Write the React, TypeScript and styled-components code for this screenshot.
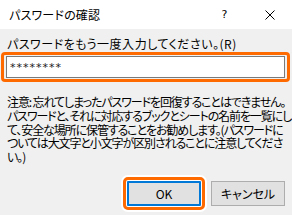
import React from "react";
import styled, { createGlobalStyle } from "styled-components";

const GlobalStyle = createGlobalStyle`
  html, body {
    margin: 0;
    padding: 0;
    width: 292px;
    height: 215px;
    overflow: hidden;
    background: #f0f0f0;
  }
  * { box-sizing: border-box; }
`;

const Window = styled.div`
  width: 292px;
  height: 215px;
  display: flex;
  flex-direction: column;
  background: #f0f0f0;
  font-family: "Noto Sans CJK JP", "Noto Sans", sans-serif;
  font-feature-settings: "palt";
  font-size: 12px;
  color: #000;
`;

const TitleBar = styled.div`
  height: 29px;
  flex: none;
  display: flex;
  align-items: center;
  background: #ffffff;
`;

const Title = styled.div`
  flex: 1;
  padding-left: 9px;
  font-size: 12px;
  line-height: 16px;
  letter-spacing: 0.2px;
  white-space: nowrap;
`;

const TitleButton = styled.div`
  width: 45px;
  height: 29px;
  display: flex;
  align-items: center;
  justify-content: center;
  font-family: "DejaVu Sans", sans-serif;
  font-size: 11px;
  color: #000;
`;

const Body = styled.div`
  flex: 1;
  display: flex;
  flex-direction: column;
  padding: 7px 7px 0 6px;
`;

const Label = styled.div`
  padding-left: 1px;
  line-height: 16px;
  letter-spacing: 0.5px;
  white-space: nowrap;
`;

const Highlight = styled.div<{ $variant: "field" | "button" }>`
  position: relative;
  display: flex;
  &::after {
    content: "";
    position: absolute;
    pointer-events: none;
    inset: ${(p) => (p.$variant === "field" ? "-4px -5px" : "-4px -4px")};
    border: 3px solid #ff6a00;
    border-radius: ${(p) => (p.$variant === "field" ? "4px" : "5px")};
    box-shadow: ${(p) =>
      p.$variant === "button"
        ? "0 0 0 2px #ffffff, inset 0 0 0 1px #ffffff"
        : "none"};
  }
`;

const FieldWrap = styled(Highlight)`
  margin-top: 4px;
  width: 279px;
`;

const PasswordInput = styled.input`
  width: 279px;
  height: 22px;
  margin: 0;
  padding: 0 0 0 3px;
  border: 1px solid #7a7a7a;
  background: #ffffff;
  font-family: "DejaVu Sans", sans-serif;
  font-size: 11px;
  letter-spacing: 1px;
  color: #1a1a1a;
  outline: none;
`;

const Note = styled.div`
  margin-top: 17px;
  padding-left: 1px;
  display: flex;
  flex-direction: column;
  letter-spacing: -1.1px;
  white-space: nowrap;
`;

const NoteLine = styled.div`
  height: 13.75px;
  line-height: 13.75px;
`;

const ButtonRow = styled.div`
  margin-top: auto;
  margin-bottom: 9px;
  display: flex;
  justify-content: flex-end;
  gap: 10px;
`;

const DialogButton = styled.button<{ $primary?: boolean }>`
  width: 74px;
  height: 25px;
  margin: 0;
  padding: 0;
  background: #e1e1e1;
  border: ${(p) => (p.$primary ? "2px solid #0078d7" : "1px solid #adadad")};
  font-family: "Noto Sans CJK JP", "Noto Sans", sans-serif;
  font-feature-settings: "palt";
  font-size: 12px;
  color: #000;
  display: flex;
  align-items: center;
  justify-content: center;
`;

const noteLines = [
  "注意: 忘れてしまったパスワードを回復することはできません。",
  "パスワードと、それに対応するブックとシートの名前を一覧にし",
  "て、安全な場所に保管することをお勧めします。(パスワードに",
  "ついては大文字と小文字が区別されることに注意してくださ",
  "い。)",
];

export default function App() {
  return (
    <>
      <GlobalStyle />
      <Window>
        <TitleBar>
          <Title>パスワードの確認</Title>
          <TitleButton>?</TitleButton>
          <TitleButton>
            <svg width="10" height="10" viewBox="0 0 10 10">
              <path d="M0.5 0.5 L9.5 9.5 M9.5 0.5 L0.5 9.5" stroke="#000" strokeWidth="1" fill="none" />
            </svg>
          </TitleButton>
        </TitleBar>
        <Body>
          <Label>パスワードをもう一度入力してください。(R)</Label>
          <FieldWrap $variant="field">
            <PasswordInput type="text" value="********" readOnly />
          </FieldWrap>
          <Note>
            {noteLines.map((line) => (
              <NoteLine key={line}>{line}</NoteLine>
            ))}
          </Note>
          <ButtonRow>
            <Highlight $variant="button">
              <DialogButton $primary>OK</DialogButton>
            </Highlight>
            <DialogButton>キャンセル</DialogButton>
          </ButtonRow>
        </Body>
      </Window>
    </>
  );
}
